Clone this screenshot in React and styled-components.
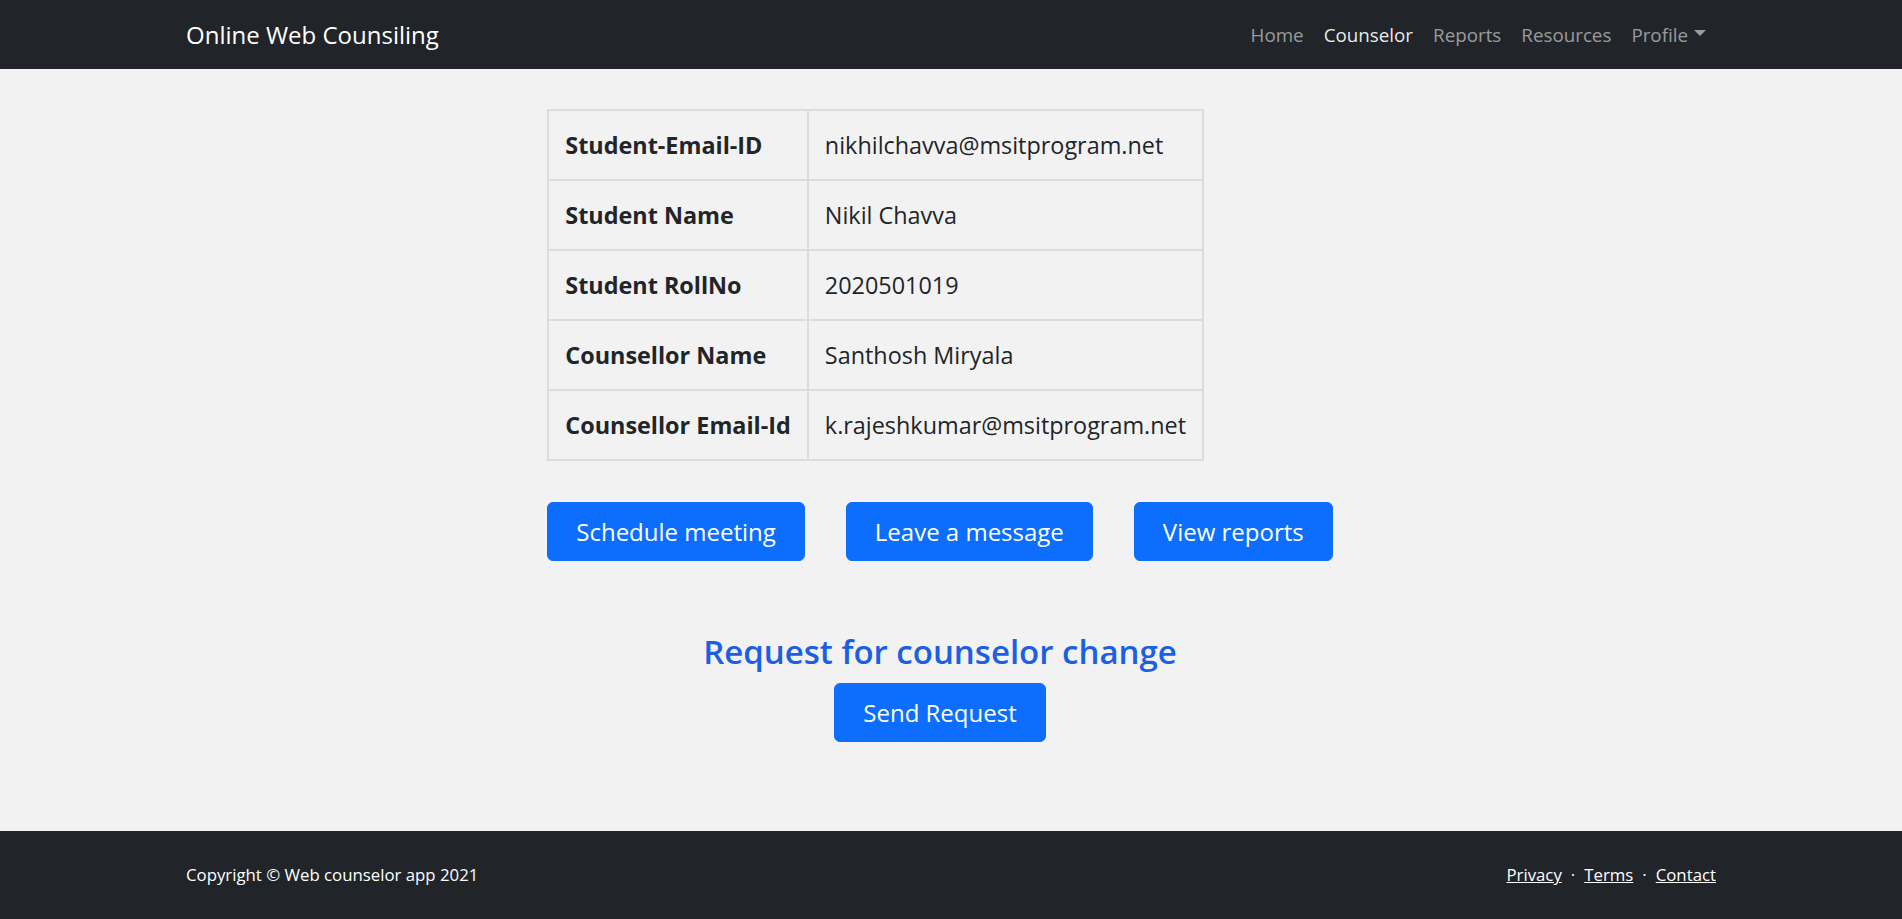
import React from 'react';
import styled, { createGlobalStyle } from 'styled-components';

// 기본 스타일
const GlobalStyle = createGlobalStyle`
    html, body {
        margin: 0;
        padding: 0;
    }
    body {
        background: #f2f2f2;
        color: #212529;
        font-family: 'Open Sans', 'Noto Sans', 'Liberation Sans', sans-serif;
        font-size: 19.2px;
        line-height: 30px;
    }
    * {
        box-sizing: border-box;
    }
`;

const Page = styled.div`
    min-height: 100vh;
    display: flex;
    flex-direction: column;
`;

// 상단 네비게이션
const NavBar = styled.nav`
    height: 69px;
    background: #212529;
    display: flex;
    align-items: center;
`;

const Container = styled.div`
    width: 100%;
    max-width: 1530px;
    margin: 0 auto;
    display: flex;
    align-items: center;
    justify-content: space-between;
`;

const Brand = styled.a`
    color: #fff;
    font-size: 24px;
    line-height: 36px;
    text-decoration: none;
    cursor: pointer;
`;

const NavList = styled.ul`
    list-style: none;
    margin: 0;
    padding: 0;
    display: flex;
    align-items: center;
`;

const NavLink = styled.a`
    display: flex;
    align-items: center;
    padding: 10px 10px;
    font-size: 18.8px;
    line-height: 30px;
    color: ${(p) => (p.$active ? 'rgba(255, 255, 255, 0.92)' : 'rgba(255, 255, 255, 0.55)')};
    text-decoration: none;
    cursor: pointer;
`;

// 드롭다운 화살표
const Caret = styled.span`
    display: inline-block;
    margin-left: 6px;
    border-top: 6px solid currentColor;
    border-left: 6px solid transparent;
    border-right: 6px solid transparent;
    transform: translateY(-2px);
`;

// 본문
const Main = styled.main`
    flex: 1;
    display: flex;
    flex-direction: column;
    align-items: center;
    padding: 40px 22px 0 0;
`;

const InfoBlock = styled.div`
    display: flex;
    flex-direction: column;
    align-items: flex-start;
`;

const InfoTable = styled.table`
    width: 654px;
    border-collapse: collapse;
`;

const Cell = styled.td`
    width: ${(p) => p.$width || 'auto'};
    padding: 19px 16px;
    border: 2px solid #dcdcdc;
    font-size: 23.4px;
    line-height: 30px;
    font-weight: ${(p) => (p.$head ? 700 : 400)};
    white-space: nowrap;
    text-align: left;
`;

const ButtonRow = styled.div`
    display: flex;
    gap: 41px;
    margin-top: 41px;
`;

const PrimaryButton = styled.button`
    background: #0d6efd;
    color: #fff;
    border: 1px solid #0d6efd;
    border-radius: 6px;
    padding: 10px 28px;
    font-family: inherit;
    font-size: 24px;
    line-height: 37px;
    cursor: pointer;

    &:hover {
        background: #0b5ed7;
    }
`;

const RequestSection = styled.section`
    margin-top: 70px;
    display: flex;
    flex-direction: column;
    align-items: center;
`;

const RequestTitle = styled.h3`
    margin: 0 0 10px;
    color: #1b5fe4;
    font-size: 33px;
    font-weight: 600;
    line-height: 42px;
`;

// 하단 푸터
const Footer = styled.footer`
    height: 88px;
    background: #212529;
    color: #fff;
    display: flex;
    align-items: center;
    font-size: 16.8px;
    line-height: 26px;
`;

const FooterLinks = styled.div`
    display: flex;
    align-items: center;
`;

const FooterLink = styled.a`
    color: #fff;
    text-decoration: underline;
    cursor: pointer;
`;

const Dot = styled.span`
    margin: 0 9px;
`;

const rows = [
    ['Student-Email-ID', 'nikhilchavva@msitprogram.net'],
    ['Student Name', 'Nikil Chavva'],
    ['Student RollNo', '2020501019'],
    ['Counsellor Name', 'Santhosh Miryala'],
    ['Counsellor Email-Id', 'k.rajeshkumar@msitprogram.net'],
];

export default function App() {
    return (
        <Page>
            <GlobalStyle />

            {/* 네비게이션 */}
            <NavBar>
                <Container>
                    <Brand>Online Web Counsiling</Brand>
                    <NavList>
                        <li><NavLink>Home</NavLink></li>
                        <li><NavLink $active>Counselor</NavLink></li>
                        <li><NavLink>Reports</NavLink></li>
                        <li><NavLink>Resources</NavLink></li>
                        <li><NavLink>Profile<Caret /></NavLink></li>
                    </NavList>
                </Container>
            </NavBar>

            <Main>
                <InfoBlock>
                    <InfoTable>
                        <tbody>
                            {rows.map(([label, value]) => (
                                <tr key={label}>
                                    <Cell as="th" $head $width="261px">{label}</Cell>
                                    <Cell>{value}</Cell>
                                </tr>
                            ))}
                        </tbody>
                    </InfoTable>

                    <ButtonRow>
                        <PrimaryButton>Schedule meeting</PrimaryButton>
                        <PrimaryButton>Leave a message</PrimaryButton>
                        <PrimaryButton>View reports</PrimaryButton>
                    </ButtonRow>
                </InfoBlock>

                {/* 상담사 변경 요청 */}
                <RequestSection>
                    <RequestTitle>Request for counselor change</RequestTitle>
                    <PrimaryButton>Send Request</PrimaryButton>
                </RequestSection>
            </Main>

            <Footer>
                <Container>
                    <span>Copyright © Web counselor app 2021</span>
                    <FooterLinks>
                        <FooterLink>Privacy</FooterLink>
                        <Dot>·</Dot>
                        <FooterLink>Terms</FooterLink>
                        <Dot>·</Dot>
                        <FooterLink>Contact</FooterLink>
                    </FooterLinks>
                </Container>
            </Footer>
        </Page>
    );
}
